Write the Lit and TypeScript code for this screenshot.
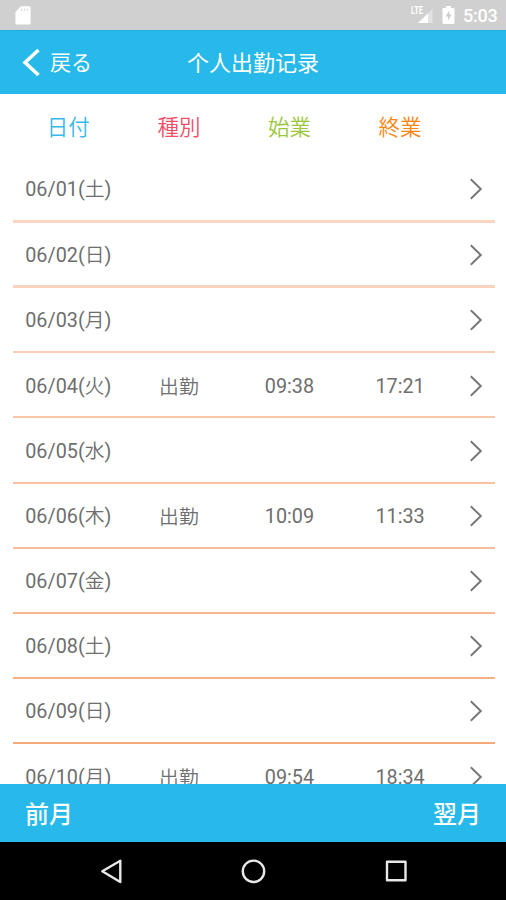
import { LitElement, html, css, svg } from "lit";
import { customElement, property } from "lit/decorators.js";

interface Day {
  date: string;
  weekday: string;
  kind?: string;
  start?: string;
  end?: string;
  line: string;
  thickness?: number;
}

const DAYS: Day[] = [
  { date: "06/01", weekday: "土", line: "#fbd5c1", thickness: 3 },
  { date: "06/02", weekday: "日", line: "#fbd2be", thickness: 3 },
  { date: "06/03", weekday: "月", line: "#faccb3" },
  { date: "06/04", weekday: "火", kind: "出勤", start: "09:38", end: "17:21", line: "#f9c8ab" },
  { date: "06/05", weekday: "水", line: "#f8c2a2" },
  { date: "06/06", weekday: "木", kind: "出勤", start: "10:09", end: "11:33", line: "#f8bd98" },
  { date: "06/07", weekday: "金", line: "#f8b78e" },
  { date: "06/08", weekday: "土", line: "#f7b284" },
  { date: "06/09", weekday: "日", line: "#f6ac7a" },
  { date: "06/10", weekday: "月", kind: "出勤", start: "09:54", end: "18:34", line: "#f6a670" },
];

@customElement("status-bar")
class StatusBar extends LitElement {
  static styles = css`
    :host {
      display: flex;
      align-items: center;
      height: 30px;
      flex: none;
      background: #d0d0d0;
      color: #fff;
      padding: 0 9px 0 15px;
      box-sizing: border-box;
    }
    .space { flex: 1; }
    .clock {
      font: 500 18px/30px Roboto, sans-serif;
      width: 34px;
      margin-left: 8px;
      padding-top: 2px;
      white-space: nowrap;
      letter-spacing: -0.25px;
    }
    .lte { font: 700 10px Roboto, sans-serif; }
    .battery { margin-left: 8px; }
    svg { display: block; flex: none; }
  `;
  render() {
    return html`
      <svg width="16" height="30" viewBox="0 0 16 30">
        <path d="M6 6.3H14a1.6 1.6 0 0 1 1.6 1.6V23a1.6 1.6 0 0 1-1.6 1.6H2A1.6 1.6 0 0 1 .4 23V12z" fill="#fff" />
        <path d="M6.6 8.5v2.6M9.4 8.5v2.6M12.2 8.5v2.6" stroke="#dedede" stroke-width="1.2" />
      </svg>
      <div class="space"></div>
      <svg width="23" height="30" viewBox="0 0 23 30">
        <path d="M21.5 9V23H7z" fill="#fff" opacity=".4" />
        <path d="M17 13.4V23H7z" fill="#fff" />
        <text class="lte" x="0" y="14" textLength="12" lengthAdjust="spacingAndGlyphs" fill="#fff">LTE</text>
      </svg>
      <svg class="battery" width="13" height="30" viewBox="0 0 13 30">
        <path d="M4 6h5v2h2.3a1.2 1.2 0 0 1 1.2 1.2V22.7a1.2 1.2 0 0 1-1.2 1.2H1.7A1.2 1.2 0 0 1 .5 22.7V9.2A1.2 1.2 0 0 1 1.7 8H4z" fill="#fff" />
        <path d="M7.3 10.2L3.6 16.4H6v4.4L9.6 14.6H7.3z" fill="#cfcfcf" />
      </svg>
      <div class="clock">5:03</div>
    `;
  }
}

@customElement("day-row")
class DayRow extends LitElement {
  @property({ attribute: false }) day!: Day;
  static styles = css`
    :host {
      display: flex;
      flex-direction: column;
      flex: none;
      height: 65.2px;
      color: #6e6e6e;
      font: 400 19.8px/30px Roboto, "Noto Sans CJK JP", sans-serif;
    }
    .cells {
      height: 63.2px;
      flex: 0 1 auto;
      box-sizing: border-box;
      display: grid;
      grid-template-columns: repeat(4, 110.6px) 1fr;
      align-items: center;
      justify-items: center;
      padding-top: 3.4px;
    }
    .cell { white-space: nowrap; }
    .han { font-weight: 350; font-family: "Noto Sans CJK JP", sans-serif; line-height: 1; }
    .kind { padding-bottom: 2px; }
    .rule { flex: none; }
    svg { display: block; margin: 0 0 2px 2px; }
  `;
  render() {
    const d = this.day;
    return html`
      <div class="cells">
        <span class="cell">${d.date}(<span class="han">${d.weekday}</span>)</span>
        <span class="cell han kind">${d.kind}</span>
        <span class="cell">${d.start}</span>
        <span class="cell">${d.end}</span>
        <svg width="14" height="22" viewBox="0 0 14 22">
          <path d="M1.8 1.3L11.8 11L1.8 20.7" fill="none" stroke="#757575" stroke-width="1.9" />
        </svg>
      </div>
      <div class="rule" style="background:${d.line};height:${d.thickness ?? 2}px"></div>
    `;
  }
}

@customElement("app-root")
class AppRoot extends LitElement {
  static styles = css`
    :host {
      display: flex;
      flex-direction: column;
      height: 900px;
      overflow: hidden;
      background: #fff;
      font-family: Roboto, "Noto Sans CJK JP", sans-serif;
    }
    .bar {
      display: grid;
      grid-template-columns: 1fr auto 1fr;
      align-items: center;
      flex: none;
      height: 64px;
      box-sizing: border-box;
      padding: 0 21px;
      background: #26b9e9;
      border-top: 1px solid #1bb0dc;
      color: #fff;
      font-size: 22px;
      line-height: 32px;
    }
    .back { display: flex; align-items: center; gap: 9px; font-size: 21px; }
    .title { font-family: "Noto Sans CJK SC", sans-serif; padding-bottom: 3px; }
    .back svg { display: block; }
    .heads {
      display: grid;
      grid-template-columns: repeat(4, 110.6px) 1fr;
      justify-items: center;
      align-items: center;
      flex: none;
      height: 63.7px;
      box-sizing: border-box;
      padding: 1px 11px 0 13px;
      font-family: "Noto Sans CJK JP", sans-serif;
      font-size: 21.5px;
      line-height: 32px;
      font-weight: 350;
    }
    .h-date { color: #38b9e9; }
    .h-kind { color: #f14d65; }
    .h-start { color: #9bc83e; }
    .h-end { color: #fb8612; }
    .list {
      display: flex;
      flex-direction: column;
      flex: 1;
      min-height: 0;
      overflow: hidden;
      padding: 0 11px 0 13px;
    }
    .months {
      display: flex;
      justify-content: space-between;
      align-items: center;
      flex: none;
      height: 58px;
      padding: 3px 25px 0;
      box-sizing: border-box;
      background: #26b9e9;
      color: #fff;
      font-weight: 500;
      font-size: 24px;
      line-height: 34px;
    }
    .nav { flex: none; height: 58px; background: #000; display: flex; justify-content: center; }
    .nav svg { display: block; }
  `;
  render() {
    return html`
      <status-bar></status-bar>
      <div class="bar">
        <div class="back">
          <svg width="20" height="30" viewBox="0 0 20 30">
            <path d="M17.5 2L4 14.5L17.5 27" fill="none" stroke="#fff" stroke-width="3.6" />
          </svg>
          <span>戻る</span>
        </div>
        <div class="title" lang="zh">个人出勤记录</div>
      </div>
      <div class="heads">
        <span class="h-date">日付</span>
        <span class="h-kind">種別</span>
        <span class="h-start">始業</span>
        <span class="h-end">終業</span>
      </div>
      <div class="list">${DAYS.map((d) => html`<day-row .day=${d}></day-row>`)}</div>
      <div class="months"><span>前月</span><span>翌月</span></div>
      <div class="nav">
        <svg width="506" height="58" viewBox="0 0 506 58">
          ${svg`<g fill="none" stroke="#e8e8e8" stroke-width="2.4" stroke-linejoin="round">
            <path d="M120.300 18.700V40L102.300 29.300z" />
            <circle cx="253.500" cy="29.300" r="10.700" />
            <rect x="387" y="19.700" width="18.500" height="18.500" />
          </g>`}
        </svg>
      </div>
    `;
  }
}
